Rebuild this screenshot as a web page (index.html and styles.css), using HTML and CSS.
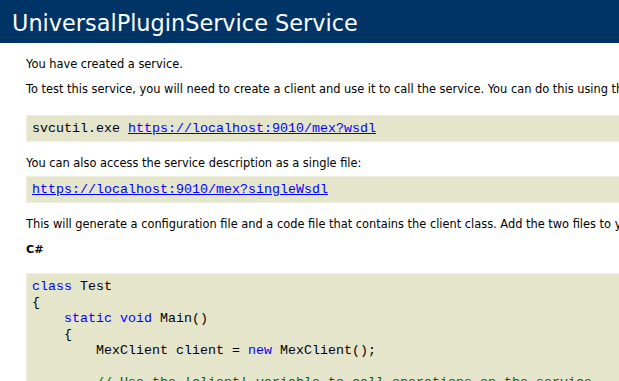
FILE: index.html
```html
<!DOCTYPE html>
<html lang="en">
<head>
  <meta charset="UTF-8">
  <title>UniversalPluginService Service</title>
  <link rel="stylesheet" href="styles.css">
</head>
<body>
  <div class="banner">
    <h1 class="heading1">UniversalPluginService Service</h1>
  </div>
  <div class="content">
    <p class="line first">You have created a service.</p>
    <p class="line">To test this service, you will need to create a client and use it to call the service. You can do this using the svcutil.exe tool from the command line with the following syntax:</p>
    <pre class="box cmd">svcutil.exe <a href="#">https://localhost:9010/mex?wsdl</a></pre>
    <p class="line after-box">You can also access the service description as a single file:</p>
    <pre class="box single"><a href="#">https://localhost:9010/mex?singleWsdl</a></pre>
    <p class="line after-box">This will generate a configuration file and a code file that contains the client class. Add the two files to your client application and use the generated client class to call the Service. For example:</p>
    <h2 class="lang">C#</h2>
    <pre class="box code"><span class="kw">class</span> Test
{
    <span class="kw">static void</span> Main()
    {
        MexClient client = <span class="kw">new</span> MexClient();

<span class="cm">        // Use the 'client' variable to call operations on the service.</span>

<span class="cm">        // Always close the client.</span>
        client.Close();
    }
}</pre>
  </div>
</body>
</html>
```

FILE: styles.css
```css
html {
  overflow: hidden;
}
body {
  margin: 0;
  background: white;
  color: #000000;
  font-family: 'DejaVu Sans', Verdana, sans-serif;
}
.banner {
  background-color: #003366;
  height: 43px;
  width: 1200px;
}
.heading1 {
  margin: 0;
  padding: 9px 0 0 12px;
  color: #ffffff;
  font-size: 22.4px;
  font-weight: normal;
  line-height: 28px;
}
.content {
  padding-left: 26px;
  width: 1200px;
}
.line {
  margin: 12px 0 0;
  font-size: 11.4px;
  line-height: 13px;
  white-space: nowrap;
}
.line.first {
  margin-top: 15px;
}
.line.after-box {
  margin-top: 15px;
}
.box {
  margin: 0;
  padding: 5px;
  background-color: #e5e5cc;
  border: 1px solid #f0f0e0;
  font-family: 'Liberation Mono', 'Courier New', monospace;
  font-size: 13.33px;
  line-height: 15px;
}
.cmd {
  margin-top: 19px;
}
.single {
  margin-top: 6px;
}
.code {
  margin-top: 17px;
  line-height: 16px;
}
.box a {
  color: #0000ff;
  text-decoration: underline;
}
.kw {
  color: #0000ff;
}
.cm {
  color: #006400;
}
.lang {
  margin: 12px 0 0;
  font-size: 11.2px;
  line-height: 13px;
  font-weight: bold;
}
```
